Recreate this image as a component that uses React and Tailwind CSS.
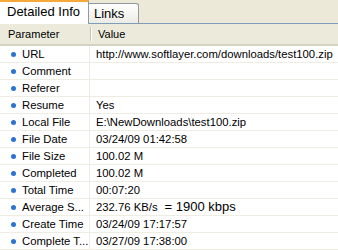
const rows = [
  ["URL", "http://www.softlayer.com/downloads/test100.zip"],
  ["Comment", ""],
  ["Referer", ""],
  ["Resume", "Yes"],
  ["Local File", "E:\\NewDownloads\\test100.zip"],
  ["File Date", "03/24/09 01:42:58"],
  ["File Size", "100.02 M"],
  ["Completed", "100.02 M"],
  ["Total Time", "00:07:20"],
  ["Average S...", "232.76 KB/s", "= 1900 kbps"],
  ["Create Time", "03/24/09 17:17:57"],
  ["Complete T...", "03/27/09 17:38:00"],
];

export default function App() {
  return (
    <div className="w-[338px] h-[250px] overflow-hidden bg-white text-black font-['Liberation_Sans',Arial,sans-serif]">
      {/* TABS */}
      <div className="flex items-end h-[24px] bg-[#ece9d8]">
        <div className="w-[89px] h-[24px] bg-white border-t-2 border-t-[#f6a93b] border-r border-r-[#919b9c] pl-[7px] pt-[1px] text-[13px] leading-[18px]">
          Detailed Info
        </div>
        <div className="w-[50px] h-[21px] rounded-tr-[3px] border-t border-r border-[#919b9c] border-b border-b-[#7f9db9] bg-gradient-to-b from-white to-[#ecebe5] pl-[5px] text-[13px] leading-[19px]">
          Links
        </div>
        <div className="flex-1 h-[1px] bg-[#7f9db9]" />
      </div>

      {/* HEADER */}
      <div className="flex h-[22px] bg-[#ebeadb] border-b-2 border-b-[#d6d2c2] text-[11px] leading-[20px]">
        <div className="w-[90px] pl-[8px]">Parameter</div>
        <div className="w-[2px] my-[3px] flex">
          <div className="w-[1px] bg-[#c7c5b2]" />
          <div className="w-[1px] bg-white" />
        </div>
        <div className="pl-[6px]">Value</div>
      </div>

      {/* ROWS */}
      {rows.map(([label, value, extra]) => (
        <div key={label} className="flex h-[17px] border-b border-[#efece1] text-[11.3px] leading-[16px]">
          <div className="w-[90px] flex items-center border-r border-[#efece1] shrink-0">
            <span className="ml-[11px] w-[5px] h-[5px] rounded-full bg-[#2c72d4]" />
            <span className="ml-[6px] whitespace-nowrap">{label}</span>
          </div>
          <div className="pl-[6px] whitespace-nowrap flex items-center">
            {value}
            {extra && <span className="ml-[7px] text-[13px]">{extra}</span>}
          </div>
        </div>
      ))}
    </div>
  );
}
